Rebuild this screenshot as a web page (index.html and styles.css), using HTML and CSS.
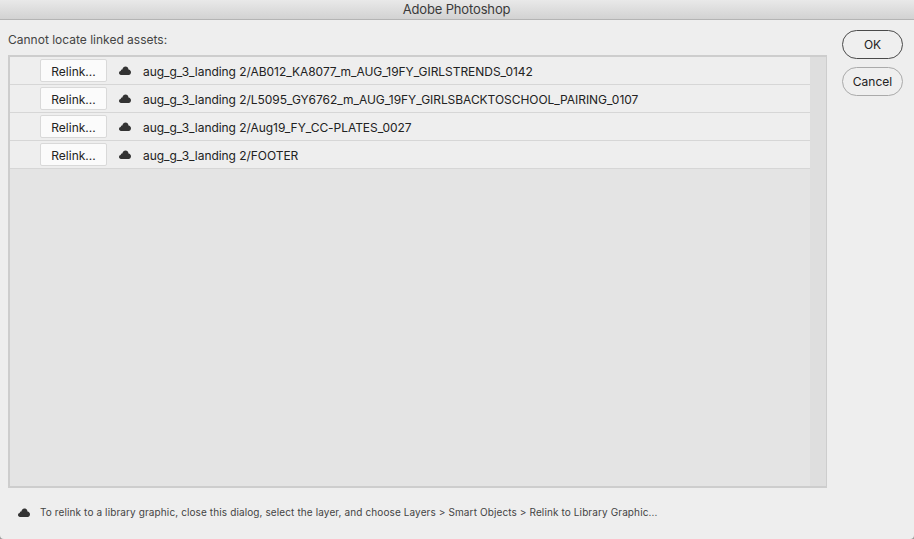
FILE: index.html
```html
<!DOCTYPE html>
<html lang="en">
<head>
<meta charset="utf-8">
<title>Adobe Photoshop</title>
<link rel="stylesheet" href="styles.css">
</head>
<body>
<svg class="defs" width="0" height="0" aria-hidden="true"><symbol id="cloud" viewBox="0 0 12 9"><path d="M2 8.9C0.8 8.9 0 8 0 7C0 6 0.7 5.2 1.7 5.1C1.7 4.1 2.5 3.4 3.3 3.6C3.8 1.6 5 0.4 6.5 0.4C8.2 0.4 9.3 1.6 9.5 3.4C10.9 3.5 12 4.7 12 6.2C12 7.7 11 8.9 9.7 8.9Z"/></symbol></svg>
<header class="titlebar">Adobe Photoshop</header>
<main class="dialog">
  <div class="content">
    <p class="heading">Cannot locate linked assets:</p>
    <div class="list">
      <div class="rows">
        <div class="row"><button class="relink">Relink...</button><svg class="cloud"><use href="#cloud"/></svg><span class="name">aug_g_3_landing 2/AB012_KA8077_m_AUG_19FY_GIRLSTRENDS_0142</span></div>
        <div class="row"><button class="relink">Relink...</button><svg class="cloud"><use href="#cloud"/></svg><span class="name">aug_g_3_landing 2/L5095_GY6762_m_AUG_19FY_GIRLSBACKTOSCHOOL_PAIRING_0107</span></div>
        <div class="row"><button class="relink">Relink...</button><svg class="cloud"><use href="#cloud"/></svg><span class="name">aug_g_3_landing 2/Aug19_FY_CC-PLATES_0027</span></div>
        <div class="row"><button class="relink">Relink...</button><svg class="cloud"><use href="#cloud"/></svg><span class="name">aug_g_3_landing 2/FOOTER</span></div>
      </div>
      <div class="scrollbar"></div>
    </div>
    <p class="hint"><svg class="cloud"><use href="#cloud"/></svg><span>To relink to a library graphic, close this dialog, select the layer, and choose Layers &gt; Smart Objects &gt; Relink to Library Graphic...</span></p>
  </div>
  <div class="actions">
    <button class="pill primary">OK</button>
    <button class="pill">Cancel</button>
  </div>
</main>
</body>
</html>
```
FILE: styles.css
```css
* { box-sizing: border-box; }
html { margin: 0; height: 100%; background: #9a9a9a; }
body {
  margin: 0;
  width: 914px;
  height: 539px;
  overflow: hidden;
  display: flex;
  flex-direction: column;
  background: #eeeeee;
  border-radius: 0 0 4px 4px;
  font-family: Inter, "Liberation Sans", sans-serif;
  color: #222;
}
.defs { position: absolute; }
.titlebar {
  height: 20px;
  flex: none;
  padding-right: 1px;
  background: linear-gradient(#e9e9e9, #d2d2d2);
  border-bottom: 1px solid #b4b4b4;
  text-align: center;
  font-size: 13px;
  letter-spacing: -0.15px;
  line-height: 19px;
  color: #3a3a3a;
}
.dialog {
  flex: 1;
  display: flex;
  padding: 10px 11px 0 8px;
}
.content {
  width: 819px;
  flex: none;
  display: flex;
  flex-direction: column;
}
.heading {
  margin: 0;
  height: 25px;
  font-size: 12px;
  line-height: 20px;
  color: #444;
}
.list {
  height: 433px;
  flex: none;
  display: flex;
  background: #e4e4e4;
  border: 2px solid #cdcdcd;
  border-width: 2px 1px 2px 2px;
}
.rows { flex: 1; }
.scrollbar {
  width: 16px;
  background: #dedede;
}
.row {
  height: 28px;
  display: flex;
  align-items: center;
  background: #eeeeee;
  border-bottom: 1px solid #d6d6d6;
  padding-left: 30px;
}
.relink {
  width: 67px;
  height: 23px;
  padding: 2px 0 0;
  background: #fbfbfb;
  border: 1px solid #d9d9d9;
  border-radius: 2px;
  font: inherit;
  font-size: 12px;
  color: #222;
}
.cloud {
  width: 12px;
  height: 9px;
  fill: #333;
  flex: none;
}
.row .cloud { margin: -1px 0 0 12px; }
.name {
  margin: 2px 0 0 12px;
  font-size: 12px;
  letter-spacing: -0.05px;
  color: #222;
}
.hint {
  margin: 16px 0 0 10px;
  display: flex;
  align-items: center;
  height: 16px;
  font-size: 10px;
  letter-spacing: 0.115px;
  color: #444;
}
.hint span { margin-left: 10px; }
.actions {
  display: flex;
  flex-direction: column;
  gap: 8px;
  margin-left: 15px;
}
.pill {
  width: 61px;
  height: 29px;
  padding: 0;
  background: #efefef;
  border: 1px solid #aaaaaa;
  border-radius: 15px;
  font: inherit;
  font-size: 12px;
  color: #222;
}
.primary { border-color: #4a4a4a; }
```
